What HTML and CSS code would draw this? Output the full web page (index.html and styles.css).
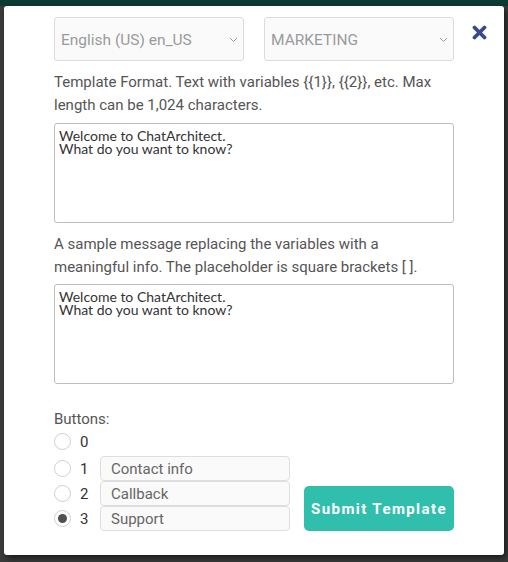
FILE: index.html
```html
<!DOCTYPE html>
<html lang="en">
<head>
    <meta charset="UTF-8">
    <meta name="viewport" content="width=device-width, initial-scale=1.0">
    <title>New Template</title>
    <link rel="stylesheet" href="styles.css">
</head>
<body>
    <div class="modal">
        <!-- Close button -->
        <button class="close" aria-label="Close">
            <svg width="15" height="15" viewBox="0 0 15 15">
                <path d="M2.5 2.5 L12.5 12.5 M12.5 2.5 L2.5 12.5" stroke="#3a4987" stroke-width="3.8" stroke-linecap="round"/>
            </svg>
        </button>

        <!-- Language and category -->
        <div class="selects">
            <div class="select">
                <span>English (US) en_US</span>
                <svg class="chevron" width="9" height="6" viewBox="0 0 9 6"><path d="M1 1 L4.5 4.5 L8 1" fill="none" stroke="#999" stroke-width="1"/></svg>
            </div>
            <div class="select">
                <span>MARKETING</span>
                <svg class="chevron" width="9" height="6" viewBox="0 0 9 6"><path d="M1 1 L4.5 4.5 L8 1" fill="none" stroke="#999" stroke-width="1"/></svg>
            </div>
        </div>

        <p class="hint">Template Format. Text with variables {{1}}, {{2}}, etc. Max length can be 1,024 characters.</p>
        <textarea class="text" spellcheck="true">Welcome to ChatArchitect.
What do you want to know?</textarea>

        <p class="hint hint-second">A sample message replacing the variables with a meaningful info. The placeholder is square brackets [ ].</p>
        <textarea class="text" spellcheck="true">Welcome to ChatArchitect.
What do you want to know?</textarea>

        <!-- Buttons -->
        <div class="buttons-label">Buttons:</div>
        <div class="buttons-row">
            <div class="options">
                <label class="option option-empty"><span class="radio"></span><span class="num">0</span></label>
                <label class="option"><span class="radio"></span><span class="num">1</span><input class="btn-input" value="Contact info"></label>
                <label class="option"><span class="radio"></span><span class="num">2</span><input class="btn-input" value="Callback"></label>
                <label class="option"><span class="radio checked"></span><span class="num">3</span><input class="btn-input" value="Support"></label>
            </div>
            <button class="submit">Submit Template</button>
        </div>
    </div>
</body>
</html>
```

FILE: styles.css
```css
body {
    margin: 0;
    height: 562px;
    overflow: hidden;
    background: linear-gradient(#0e3a33 0, #0e3a33 6px, #3b3b3b 6px);
    font-family: Roboto, "Liberation Sans", sans-serif;
}
.modal {
    position: relative;
    box-sizing: border-box;
    width: 500px;
    height: 549px;
    margin: 6px 0 0 4px;
    padding: 11px 50px 0 50px;
    background: white;
    border-radius: 3px;
    box-shadow: 2px 3px 6px rgba(0, 0, 0, 0.6);
}
.close {
    position: absolute;
    top: 19px;
    right: 17px;
    padding: 0;
    border: none;
    background: none;
    line-height: 0;
}
.selects {
    display: flex;
    gap: 20px;
}
.select {
    box-sizing: border-box;
    width: 190px;
    height: 44px;
    display: flex;
    align-items: center;
    justify-content: space-between;
    padding: 2px 5px 0 6px;
    background: #fafafa;
    border: 1px solid #dcdcdc;
    border-radius: 3px;
    color: #9a9a9a;
    font-size: 15.5px;
}
.hint {
    margin: 10px 0 6px 0;
    font-size: 15px;
    line-height: 23px;
    color: #555;
}
.hint-second {
    margin: 10px 0 5px 0;
}
.text {
    display: block;
    box-sizing: border-box;
    width: 400px;
    height: 100px;
    margin: 0;
    padding: 5px 4px;
    border: 1px solid #bdbdbd;
    border-radius: 3px;
    resize: none;
    font-family: Lato, sans-serif;
    font-size: 14px;
    line-height: 13px;
    color: #333;
    outline: none;
}
.buttons-label {
    margin-top: 25px;
    font-size: 15px;
    line-height: 20px;
    color: #555;
}
.buttons-row {
    display: flex;
    align-items: flex-end;
    gap: 14px;
}
.options {
    display: flex;
    flex-direction: column;
}
.option {
    display: flex;
    align-items: center;
    height: 25px;
}
.option-empty {
    margin-bottom: 2px;
}
.radio {
    box-sizing: border-box;
    width: 17px;
    height: 17px;
    border: 1px solid #cfcfcf;
    border-radius: 50%;
    background: white;
    display: flex;
    align-items: center;
    justify-content: center;
}
.radio.checked::after {
    content: "";
    width: 9px;
    height: 9px;
    border-radius: 50%;
    background: #505050;
}
.num {
    width: 29px;
    padding-left: 9px;
    box-sizing: border-box;
    font-size: 15px;
    color: #333;
}
.btn-input {
    box-sizing: border-box;
    width: 190px;
    height: 25px;
    margin: 0;
    padding: 0 10px;
    background: #fafafa;
    border: 1px solid #dedede;
    border-radius: 4px;
    font-family: Roboto, sans-serif;
    font-size: 15px;
    color: #666;
}
.submit {
    width: 150px;
    height: 45px;
    padding: 0;
    border: none;
    border-radius: 5px;
    background: #31bfad;
    color: white;
    font-family: Roboto, sans-serif;
    font-weight: bold;
    font-size: 15px;
    letter-spacing: 1.4px;
    white-space: nowrap;
    cursor: pointer;
}
```
